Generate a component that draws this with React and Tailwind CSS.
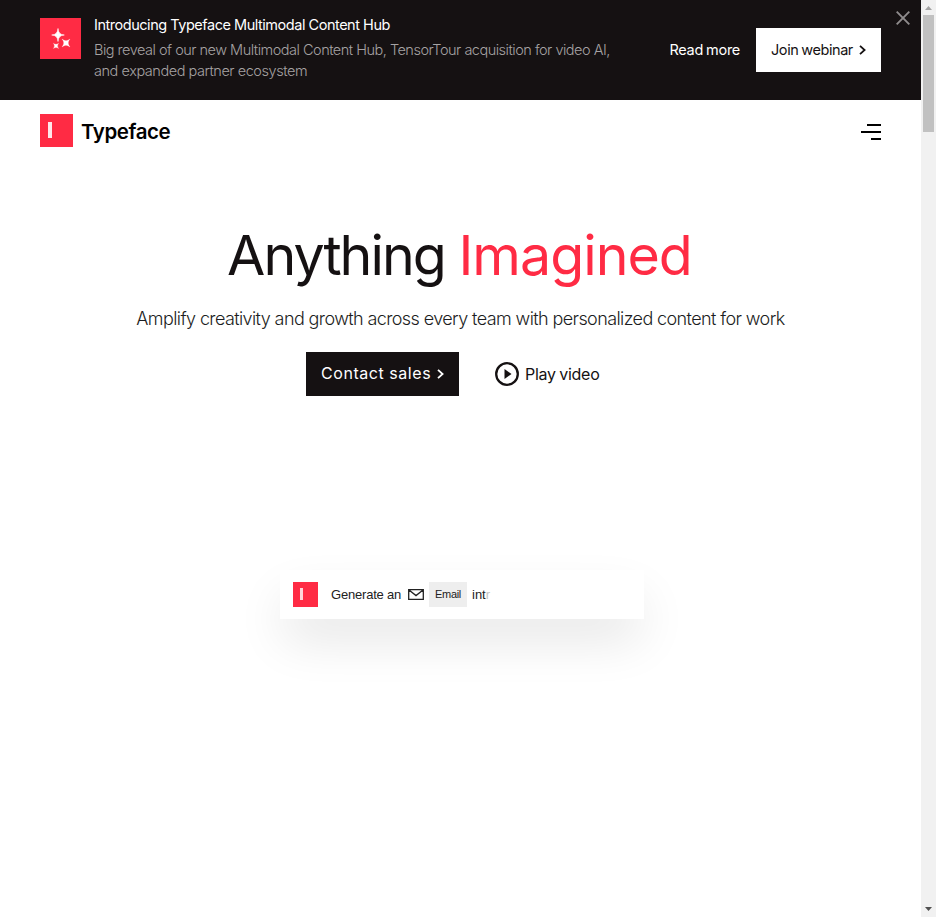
const Chevron = ({ className }) => (
  <svg className={className} width="7" height="10" viewBox="0 0 7 10" fill="none" stroke="currentColor" strokeWidth="1.8">
    <path d="M1 .8l4.6 4.2L1 9.2" />
  </svg>
);

const Sparkles = () => (
  <svg width="41" height="41" viewBox="0 0 41 41" fill="#fff">
    <path d="M18 10.5Q18.3 16.7 24.3 17Q18.3 17.3 18 23.5Q17.7 17.3 11.7 17Q17.7 16.7 18 10.5Z" stroke="#fff" strokeWidth="0.6" />
    <path d="M22.1 21.1Q26 24.5 29.9 21.1Q26.5 25 29.9 28.9Q26 25.5 22.1 28.9Q25.5 25 22.1 21.1Z" stroke="#fff" strokeWidth="0.3" />
    <path d="M13.3 25.2Q16 27.5 18.7 25.2Q16.4 27.9 18.7 30.6Q16 28.3 13.3 30.6Q15.6 27.9 13.3 25.2Z" stroke="#fff" strokeWidth="0.2" />
  </svg>
);

function Banner() {
  return (
    <div className="relative flex h-[100px] bg-[#151112] pl-10 pr-10 text-white">
      <div className="mt-[18px] size-[41px] shrink-0 bg-[#ff2b44]">
        <Sparkles />
      </div>
      <div className="ml-[13px] mt-[14px] grow whitespace-nowrap text-[14.5px]">
        <p className="leading-[22px] tracking-[-0.47px]">Introducing Typeface Multimodal Content Hub</p>
        <p className="mt-[3px] font-light leading-[21px] tracking-[-0.5px] text-[#a5a2a3]">
          Big reveal of our new Multimodal Content Hub, TensorTour acquisition for video AI,
          <br />
          <span className="tracking-[-0.45px]">and expanded partner ecosystem</span>
        </p>
      </div>
      <a className="mr-4 mt-[39px] whitespace-nowrap text-[14.5px] leading-[22px] tracking-[-0.28px] [word-spacing:-0.8px]">Read more</a>
      <a className="mt-7 flex h-11 w-[125px] shrink-0 items-center bg-white pl-[15px] text-[14.5px] tracking-[-0.42px] text-[#151112] [word-spacing:-0.8px]">
        <span className="w-[88px] whitespace-nowrap">Join webinar</span>
        <Chevron />
      </a>
      <svg className="absolute right-[11px] top-[11px]" width="14" height="14" viewBox="0 0 14 14" stroke="#8f8c8d" strokeWidth="1.9">
        <path d="M.7.7l12.6 12.6M13.3.7L.7 13.3" />
      </svg>
    </div>
  );
}

function Header() {
  return (
    <header className="flex h-16 items-start justify-between px-10 pt-[14px]">
      <div className="flex">
        <div className="size-[33px] bg-[#ff2b44] pl-2 pt-2">
          <div className="h-4 w-1 bg-[#ffe9ec]" />
        </div>
        <span className="ml-2 text-[20.5px] font-semibold leading-[35px] tracking-[-0.42px] text-black">Typeface</span>
      </div>
      <div className="mt-[10px] flex w-5 flex-col items-end gap-[5px]">
        <div className="h-0.5 w-[14px] bg-black" />
        <div className="h-0.5 w-5 bg-black" />
        <div className="h-0.5 w-[10px] bg-black" />
      </div>
    </header>
  );
}

function PromptCard() {
  return (
    <div className="ml-[280px] mt-[174px] flex h-[49px] w-[364px] items-start bg-white pl-[13px] pt-3 font-['Liberation_Sans',Arial,sans-serif] text-[#222] shadow-[0_24px_50px_-4px_rgba(0,0,0,0.11)]">
      <div className="size-[25px] bg-[#ff2b44] pl-[7px] pt-[6px]">
        <div className="h-3 w-[3px] bg-[#ffd5da]" />
      </div>
      <span className="ml-[13px] w-[77px] whitespace-nowrap text-[13px] leading-[25px] tracking-[-0.2px]">Generate an</span>
      <svg className="mt-[7px]" width="16" height="11" viewBox="0 0 16 11" fill="none" stroke="#222" strokeWidth="1.3">
        <path d="M.7.7h14.6v9.6H.7zM1 1l7 5.6L15 1" />
      </svg>
      <span className="ml-[5px] w-[38px] bg-[#eee] text-center text-[11px] leading-[25px] tracking-[-0.3px]">Email</span>
      <span className="ml-[5px] text-[13px] leading-[25px]">
        int<span className="text-[#c4c4c4]">r</span>
      </span>
    </div>
  );
}

function Scrollbar() {
  return (
    <div className="flex h-[917px] w-[15px] shrink-0 flex-col items-center bg-[#f1f1f1]">
      <svg className="mt-[6px]" width="7" height="4" viewBox="0 0 7 4" fill="#a3a3a3">
        <path d="M3.5 0L7 4H0z" />
      </svg>
      <div className="mt-[5px] h-[117px] w-[11px] bg-[#c1c1c1]" />
      <svg className="mb-[6px] mt-auto" width="7" height="4" viewBox="0 0 7 4" fill="#505050">
        <path d="M3.5 4L7 0H0z" />
      </svg>
    </div>
  );
}

export default function App() {
  return (
    <div className="flex h-[917px] w-[936px] overflow-hidden bg-white font-['Inter','Liberation_Sans',sans-serif]">
      <main className="w-[921px]">
        <Banner />
        <Header />
        <h1 className="mt-[56px] whitespace-nowrap pr-[2px] text-center text-[55.5px] leading-[70px] tracking-[-1.98px] text-[#151112]">
          Anything <span className="tracking-[-0.98px] text-[#ff2b44]">Imagined</span>
        </h1>
        <p className="mt-4 whitespace-nowrap text-center text-[18px] font-light leading-[26px] tracking-[-0.6px] text-[#1c1d22]">
          Amplify creativity and growth across every team with personalized content for work
        </p>
        <div className="ml-[306px] mt-5 flex">
          <a className="flex h-11 w-[153px] items-center bg-[#151112] pl-[15px] text-[16px] tracking-[0.55px] text-white">
            <span className="w-[116px] whitespace-nowrap pb-0.5">Contact sales</span>
            <Chevron />
          </a>
          <a className="ml-9 flex items-center text-[16px] tracking-[-0.3px] text-[#151112]">
            <svg width="24" height="24" viewBox="0 0 24 24" fill="none">
              <circle cx="12" cy="12" r="10.8" stroke="#151112" strokeWidth="2.3" />
              <path d="M9.5 7v10l7-5z" fill="#151112" />
            </svg>
            <span className="ml-[6px] whitespace-nowrap [word-spacing:-0.5px]">Play video</span>
          </a>
        </div>
        <PromptCard />
      </main>
      <Scrollbar />
    </div>
  );
}
